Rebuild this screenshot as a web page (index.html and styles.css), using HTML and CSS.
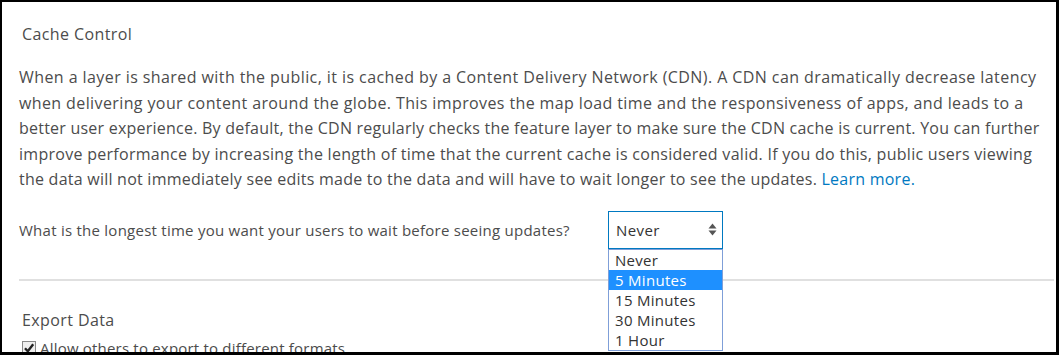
FILE: index.html
```html
<!DOCTYPE html>
<html>
<head>
<meta charset="utf-8">
<link rel="stylesheet" href="styles.css">
</head>
<body>
<div class="frame">
  <section class="section">
    <h2 class="title">Cache Control</h2>
    <p class="desc"><span class="ln l1">When a layer is shared with the public, it is cached by a Content Delivery Network (CDN). A CDN can dramatically decrease latency</span>
<span class="ln l2">when delivering your content around the globe. This improves the map load time and the responsiveness of apps, and leads to a</span>
<span class="ln l3">better user experience. By default, the CDN regularly checks the feature layer to make sure the CDN cache is current. You can further</span>
<span class="ln l4">improve performance by increasing the length of time that the current cache is considered valid. If you do this, public users viewing</span>
<span class="ln l5">the data will not immediately see edits made to the data and will have to wait longer to see the updates. <a class="link" href="#">Learn more.</a></span></p>
    <div class="question">
      <span class="qlabel">What is the longest time you want your users to wait before seeing updates?</span>
      <div class="select-wrap">
        <div class="select">
          <span>Never</span>
          <svg class="arrows" width="9" height="13" viewBox="0 0 9 13"><path d="M4.5 0.5 L8.5 5.5 L0.5 5.5 Z" fill="#555"/><path d="M4.5 12.5 L8.5 7.5 L0.5 7.5 Z" fill="#555"/></svg>
        </div>
        <ul class="options">
          <li class="opt">Never</li>
          <li class="opt sel">5 Minutes</li>
          <li class="opt">15 Minutes</li>
          <li class="opt">30 Minutes</li>
          <li class="opt">1 Hour</li>
        </ul>
      </div>
    </div>
  </section>
  <hr class="divider">
  <section class="section export">
    <h2 class="title">Export Data</h2>
    <label class="check"><span class="box"><svg width="12" height="12" viewBox="0 0 12 12"><path d="M2 6.2 L4.8 9.2 L10.2 2.2" fill="none" stroke="#222" stroke-width="2.4"/></svg></span>Allow others to export to different formats.</label>
  </section>
</div>
</body>
</html>
```
FILE: styles.css
```css
html, body {
  margin: 0;
  padding: 0;
  width: 1059px;
  height: 355px;
  overflow: hidden;
  background: #000;
}
.frame {
  box-sizing: border-box;
  width: 1054px;
  height: 350px;
  margin: 2px 0 0 2px;
  background: #fff;
  font-family: "Open Sans", "Noto Sans", sans-serif;
  color: #4c4c4c;
  overflow: hidden;
}
.section {
  padding: 0 0 0 17px;
}
.title {
  margin: 0;
  padding: 22px 0 0 3px;
  font-size: 16px;
  letter-spacing: 0.4px;
  font-weight: 400;
  line-height: 20px;
}
.desc {
  margin: 21px 0 0 0;
  font-size: 16px;
  line-height: 25.6px;
  white-space: nowrap;
}
.ln {
  display: block;
}
.l1 { letter-spacing: 0.42px; }
.l2 { letter-spacing: 0.39px; }
.l3 { letter-spacing: 0.23px; }
.l4 { letter-spacing: 0.28px; }
.l5 { letter-spacing: 0.24px; }
.link {
  color: #0079c1;
  text-decoration: none;
}
.question {
  display: flex;
  align-items: center;
  margin-top: 18px;
}
.qlabel {
  font-size: 15px;
  letter-spacing: 0.25px;
  line-height: 20px;
  width: 589px;
}
.select-wrap {
  position: relative;
}
.select {
  box-sizing: border-box;
  width: 115px;
  height: 38px;
  border: 1px solid #0079c1;
  display: flex;
  align-items: center;
  justify-content: space-between;
  padding: 0 5px 0 7px;
  font-size: 15px;
  letter-spacing: 0.4px;
  color: #333;
}
.options {
  position: absolute;
  left: 0;
  top: 38px;
  box-sizing: border-box;
  width: 115px;
  margin: 0;
  padding: 0;
  list-style: none;
  border: 1px solid #7f9fd8;
  background: #fff;
  z-index: 2;
}
.opt {
  font-size: 15px;
  letter-spacing: 0.3px;
  line-height: 20px;
  padding: 0 0 0 6px;
  color: #333;
}
.opt.sel {
  background: #1e90ff;
  color: #fff;
}
.divider {
  border: 0;
  border-top: 2px solid #e0e0e0;
  margin: 30px 0 0 17px;
  width: 1035px;
}
.export .title {
  padding-top: 29px;
}
.check {
  display: flex;
  align-items: center;
  font-size: 15px;
  letter-spacing: 0.2px;
  line-height: 20px;
  margin-top: 8px;
  padding-left: 3px;
}
.box {
  box-sizing: border-box;
  width: 14px;
  height: 14px;
  border: 1px solid #888;
  background: #eee;
  display: inline-flex;
  align-items: center;
  justify-content: center;
  margin-right: 4px;
}
```
